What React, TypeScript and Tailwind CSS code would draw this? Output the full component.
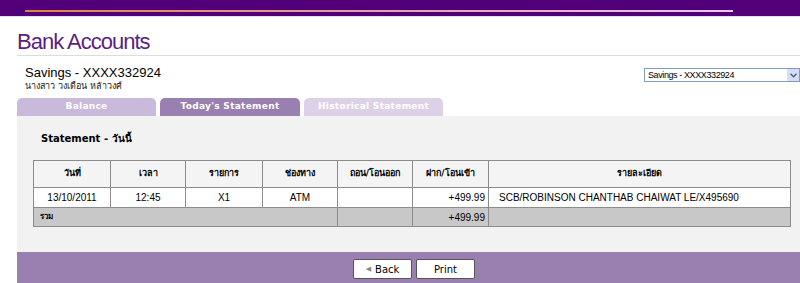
import React from "react";

const cols = [77, 75, 77, 75, 75, 76, 302];
const headers = ["วันที่", "เวลา", "รายการ", "ช่องทาง", "ถอน/โอนออก", "ฝาก/โอนเข้า", "รายละเอียด"];

const App: React.FC = () => {
  return (
    <div className="w-[800px] h-[283px] overflow-hidden bg-white font-['Liberation_Sans',Arial,sans-serif]">
      {/* top band */}
      <div className="h-[16px] bg-[#52007a] pt-[10px] pl-[25px]">
        <div className="h-[2px] w-[708px] bg-gradient-to-r from-[#e0823c] via-[#e6a0a8] to-[#e8c8ec]" />
      </div>
      <div className="h-px bg-[#e4dcf0]" />

      <div className="pl-[17px]">
        <h1 className="h-[39px] pt-[12px] text-[22px] leading-[25px] tracking-[-1px] text-[#5b1f82] border-b border-[#dcdcdc]">
          Bank Accounts
        </h1>

        {/* account line */}
        <div className="flex justify-between pl-[8px] pt-[9px] h-[42px]">
          <div>
            <div className="text-[13px] leading-[15px] text-black">Savings - XXXX332924</div>
            <div className="text-[9px] leading-[12px] text-[#222] font-['DejaVu_Sans','Noto_Sans',sans-serif]">
              นางสาว วงเดือน หล้าวงศ์
            </div>
          </div>
          <div className="mt-[3px] flex h-[14px] w-[156px] items-center border border-[#7f9db9] bg-white">
            <span className="flex-1 pl-[3px] text-[9px] leading-[12px] tracking-[-0.4px] text-black">
              Savings - XXXX332924
            </span>
            <span className="flex h-[12px] w-[12px] items-center justify-center rounded-[1px] bg-[#d4def6]">
              <svg width="7" height="5" viewBox="0 0 7 5">
                <path d="M0.5 0.8 L3.5 3.8 L6.5 0.8" fill="none" stroke="#4d6185" strokeWidth="1.5" />
              </svg>
            </span>
          </div>
        </div>

        {/* tabs */}
        <div className="flex gap-[4px] h-[18px] font-['DejaVu_Sans',Verdana,sans-serif] text-[9px] font-bold tracking-[0.3px] text-white">
          <div className="flex w-[139px] items-center justify-center rounded-t-[5px] bg-[#c9b9da]">Balance</div>
          <div className="flex w-[140px] items-center justify-center rounded-t-[5px] bg-[#9a80b0]">Today's Statement</div>
          <div className="flex w-[139px] items-center justify-center rounded-t-[5px] bg-[#ddd1e8]">Historical Statement</div>
        </div>

        {/* statement panel */}
        <div className="h-[136px] bg-[#f2f2f2] pl-[16px] pt-[17px]">
          <div className="pl-[8px] text-[10px] font-bold leading-[12px] text-black font-['DejaVu_Sans','Noto_Sans',sans-serif]">
            Statement - วันนี้
          </div>
          <table className="mt-[15px] border-collapse border border-[#8c8c8c] text-[10px] text-black font-['DejaVu_Sans','Noto_Sans',sans-serif]">
            <colgroup>
              {cols.map((w, i) => (
                <col key={i} style={{ width: w }} />
              ))}
            </colgroup>
            <thead>
              <tr className="h-[27px] bg-[#f4f4f4]">
                {headers.map((h) => (
                  <th key={h} className="border border-[#8c8c8c] p-0 text-center text-[9px] font-bold">
                    {h}
                  </th>
                ))}
              </tr>
            </thead>
            <tbody>
              <tr className="h-[20px] bg-white font-['Liberation_Sans',Arial,sans-serif]">
                <td className="border border-[#8c8c8c] text-center">13/10/2011</td>
                <td className="border border-[#8c8c8c] text-center">12:45</td>
                <td className="border border-[#8c8c8c] text-center">X1</td>
                <td className="border border-[#8c8c8c] text-center">ATM</td>
                <td className="border border-[#8c8c8c]"></td>
                <td className="border border-[#8c8c8c] pr-[3px] text-right">+499.99</td>
                <td className="border border-[#8c8c8c] pl-[10px] text-left">SCB/ROBINSON CHANTHAB CHAIWAT LE/X495690</td>
              </tr>
              <tr className="h-[19px] bg-[#c8c8c8]">
                <td colSpan={4} className="border border-[#8c8c8c] pl-[6px] text-left text-[8px] font-bold">
                  รวม
                </td>
                <td className="border border-[#8c8c8c]"></td>
                <td className="border border-[#8c8c8c] pr-[3px] text-right font-['Liberation_Sans',Arial,sans-serif]">
                  +499.99
                </td>
                <td className="border border-[#8c8c8c]"></td>
              </tr>
            </tbody>
          </table>
        </div>

        {/* footer */}
        <div className="flex h-[31px] justify-center gap-[4px] bg-[#9a80b0] pt-[7px] pl-[11px]">
          <button className="flex h-[20px] w-[59px] items-center justify-center gap-[4px] rounded-[2px] border border-[#555] bg-white text-[10px] text-black font-['DejaVu_Sans',Verdana,sans-serif]">
            <span className="text-[7px] text-[#888]">◀</span>Back
          </button>
          <button className="flex h-[20px] w-[59px] items-center justify-center rounded-[2px] border border-[#555] bg-white text-[10px] text-black font-['DejaVu_Sans',Verdana,sans-serif]">
            Print
          </button>
        </div>
      </div>
    </div>
  );
};

export default App;
